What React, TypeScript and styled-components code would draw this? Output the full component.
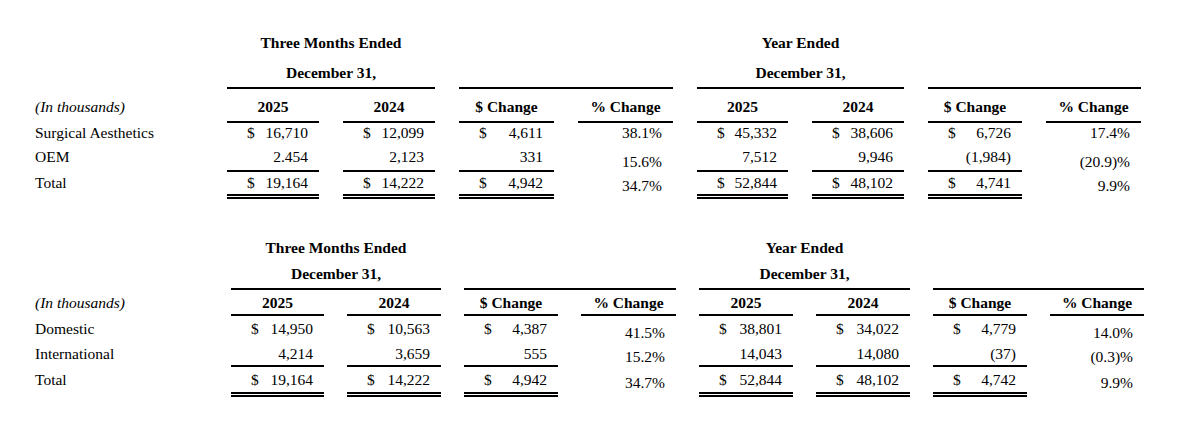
import React from 'react';
import styled, { createGlobalStyle } from 'styled-components';

type Line = 'none' | 'single' | 'double';

type RowBox = { mt: number; h: number };

type Section = {
  cols: string;
  gap: number;
  boxes: RowBox[]; // title1, title2, years, row1, row2, total
  shifts: number[]; // % change offsets for row1, row2, total
  rows: { label: string; values: string[] }[];
};

const sections: Section[] = [
  {
    cols: '168px 92px 92px 95px 95px 91px 92px 94px 95px',
    gap: 24,
    boxes: [
      { mt: 33, h: 20 },
      { mt: 6, h: 28 },
      { mt: 4, h: 28 },
      { mt: 0, h: 20 },
      { mt: 1, h: 26 },
      { mt: 0, h: 22 },
    ],
    shifts: [0, 5, 3],
    rows: [
      {
        label: 'Surgical Aesthetics',
        values: ['16,710', '12,099', '4,611', '38.1%', '45,332', '38,606', '6,726', '17.4%'],
      },
      {
        label: 'OEM',
        values: ['2.454', '2,123', '331', '15.6%', '7,512', '9,946', '(1,984)', '(20.9)%'],
      },
      {
        label: 'Total',
        values: ['19,164', '14,222', '4,942', '34.7%', '52,844', '48,102', '4,741', '9.9%'],
      },
    ],
  },
  {
    cols: '173px 93px 94px 94px 95px 94px 94px 94px 94px',
    gap: 23,
    boxes: [
      { mt: 39, h: 20 },
      { mt: 2, h: 28 },
      { mt: 2, h: 22 },
      { mt: 0, h: 26 },
      { mt: 0, h: 23 },
      { mt: 0, h: 25 },
    ],
    shifts: [4, 3, 3],
    rows: [
      {
        label: 'Domestic',
        values: ['14,950', '10,563', '4,387', '41.5%', '38,801', '34,022', '4,779', '14.0%'],
      },
      {
        label: 'International',
        values: ['4,214', '3,659', '555', '15.2%', '14,043', '14,080', '(37)', '(0.3)%'],
      },
      {
        label: 'Total',
        values: ['19,164', '14,222', '4,942', '34.7%', '52,844', '48,102', '4,742', '9.9%'],
      },
    ],
  },
];

const lineCss = (line?: Line) =>
  line === 'single'
    ? 'border-bottom: 2px solid #000;'
    : line === 'double'
    ? 'border-bottom: 5px double #000;'
    : 'border-bottom: none;';

const GlobalStyle = createGlobalStyle`
  html, body {
    margin: 0;
    padding: 0;
    background: #fff;
  }
  body {
    font-family: "Liberation Serif", "Times New Roman", serif;
    font-size: 15.5px;
    color: #000;
  }
`;

const Page = styled.div`
  width: 1200px;
  height: 431px;
  padding-left: 35px;
  box-sizing: border-box;
  display: flex;
  flex-direction: column;
`;

const Row = styled.div<{ $cols: string; $gap: number; $mt: number }>`
  display: grid;
  grid-template-columns: ${p => p.$cols};
  column-gap: ${p => p.$gap}px;
  align-items: start;
  margin-top: ${p => p.$mt}px;
`;

const BaseCell = styled.div<{ $h: number; $line?: Line }>`
  height: ${p => p.$h}px;
  display: flex;
  align-items: center;
  line-height: 20px;
  white-space: nowrap;
  ${p => lineCss(p.$line)}
`;

const LabelCell = styled(BaseCell)<{ $italic?: boolean }>`
  font-style: ${p => (p.$italic ? 'italic' : 'normal')};
`;

const HeadCell = styled(BaseCell)<{ $span?: number }>`
  grid-column: span ${p => p.$span ?? 1};
  justify-content: center;
  font-weight: bold;
`;

const AmountCell = styled(BaseCell)`
  justify-content: space-between;
  padding: 0 11px 0 20px;
`;

const PctCell = styled(BaseCell)<{ $shift: number }>`
  justify-content: flex-end;
  box-sizing: border-box;
  padding: ${p => p.$shift * 2}px 11px 0 0;
  height: ${p => p.$h}px;
`;

const Amount = ({ h, value, dollar, line }: { h: number; value: string; dollar: boolean; line: Line }) => (
  <AmountCell $h={h} $line={line}>
    <span>{dollar ? '$' : ''}</span>
    <span>{value}</span>
  </AmountCell>
);

const Table = ({ s }: { s: Section }) => {
  const [t1, t2, yr, ...body] = s.boxes;
  const rowProps = (b: RowBox) => ({ $cols: s.cols, $gap: s.gap, $mt: b.mt });

  return (
    <>
      <Row {...rowProps(t1)}>
        <LabelCell $h={t1.h} />
        <HeadCell $h={t1.h} $span={2}>Three Months Ended</HeadCell>
        <HeadCell $h={t1.h} $span={2} />
        <HeadCell $h={t1.h} $span={2}>Year Ended</HeadCell>
        <HeadCell $h={t1.h} $span={2} />
      </Row>
      <Row {...rowProps(t2)}>
        <LabelCell $h={t2.h} />
        <HeadCell $h={t2.h} $span={2} $line="single">December 31,</HeadCell>
        <HeadCell $h={t2.h} $span={2} $line="single" />
        <HeadCell $h={t2.h} $span={2} $line="single">December 31,</HeadCell>
        <HeadCell $h={t2.h} $span={2} $line="single" />
      </Row>
      <Row {...rowProps(yr)}>
        <LabelCell $h={yr.h} $italic>(In thousands)</LabelCell>
        {['2025', '2024', '$ Change', '% Change', '2025', '2024', '$ Change', '% Change'].map((t, i) => (
          <HeadCell key={i} $h={yr.h} $line="single">
            {t}
          </HeadCell>
        ))}
      </Row>
      {s.rows.map((r, ri) => {
        const b = body[ri];
        const dollar = ri !== 1;
        const line: Line = ri === 1 ? 'single' : ri === 2 ? 'double' : 'none';
        return (
          <Row key={r.label} {...rowProps(b)}>
            <LabelCell $h={b.h}>{r.label}</LabelCell>
            {r.values.map((v, i) =>
              i % 4 === 3 ? (
                <PctCell key={i} $h={b.h} $shift={s.shifts[ri]}>
                  {v}
                </PctCell>
              ) : (
                <Amount key={i} h={b.h} value={v} dollar={dollar} line={line} />
              )
            )}
          </Row>
        );
      })}
    </>
  );
};

const App = () => {
  return (
    <Page>
      <GlobalStyle />
      {sections.map((s, i) => (
        <Table key={i} s={s} />
      ))}
    </Page>
  );
};

export default App;
